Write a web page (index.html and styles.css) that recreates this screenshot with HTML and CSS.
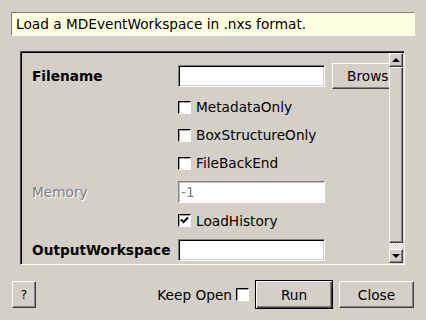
FILE: index.html
```html
<!DOCTYPE html>
<html lang="en">
<head>
    <meta charset="UTF-8">
    <title>LoadMD input dialog</title>
    <link rel="stylesheet" href="styles.css">
</head>
<body>
    <div class="desc">Load a MDEventWorkspace in .nxs format.</div>

    <div class="frame">
        <div class="view">
            <div class="row first">
                <span class="label bold">Filename</span>
                <input class="field" type="text">
                <button class="btn browse">Browse</button>
            </div>
            <div class="row">
                <span></span>
                <label class="check"><span class="box"></span>MetadataOnly</label>
            </div>
            <div class="row">
                <span></span>
                <label class="check"><span class="box"></span>BoxStructureOnly</label>
            </div>
            <div class="row">
                <span></span>
                <label class="check"><span class="box"></span>FileBackEnd</label>
            </div>
            <div class="row tall">
                <span class="label disabled">Memory</span>
                <input class="field" type="text" value="-1" disabled>
            </div>
            <div class="row tall">
                <span></span>
                <label class="check">
                    <span class="box">
                        <svg width="11" height="11" viewBox="0 0 11 11"><path d="M2 4.5 L4.5 7 L9 2.5" fill="none" stroke="#000" stroke-width="2"/></svg>
                    </span>LoadHistory
                </label>
            </div>
            <div class="row tall">
                <span class="label bold">OutputWorkspace</span>
                <input class="field" type="text">
            </div>
        </div>

        <div class="scrollbar">
            <div class="sb-btn"><span class="arrow up"></span></div>
            <div class="sb-handle"></div>
            <div class="sb-trough"></div>
            <div class="sb-btn"><span class="arrow down"></span></div>
        </div>
    </div>

    <div class="footer">
        <button class="btn help">?</button>
        <span class="keep">Keep Open</span>
        <span class="box"></span>
        <button class="btn run">Run</button>
        <button class="btn close">Close</button>
    </div>
</body>
</html>
```

FILE: styles.css
```css
/* Page: classic grey dialog */
body {
    margin: 0;
    width: 426px;
    height: 320px;
    overflow: hidden;
    background-color: #d4d0c8;
    color: #000;
    font-family: "DejaVu Sans", sans-serif;
    font-size: 13.7px;
}

/* Algorithm description box */
.desc {
    box-sizing: border-box;
    margin: 12px 11px 0 11px;
    height: 24px;
    padding-left: 4px;
    display: flex;
    align-items: center;
    background-color: #ffffe1;
    border: 1px solid;
    border-color: #808080 #fff #fff #808080;
    white-space: nowrap;
}

/* Sunken scroll frame */
.frame {
    box-sizing: border-box;
    margin: 15px 0 0 20px;
    width: 385px;
    height: 214px;
    display: flex;
    border: 1px solid;
    border-color: #404040 #fff #fff #404040;
    box-shadow: inset 1px 1px 0 #000, inset -1px -1px 0 #d4d0c8;
    padding: 1px;
}

.view {
    flex: 1;
    overflow: hidden;
    padding: 10px 0 0 10px;
}

.row {
    display: grid;
    grid-template-columns: 146px 146px auto;
    align-items: center;
    height: 28px;
}

.row.first {
    height: 26px;
    margin-bottom: 4px;
}

.row.tall {
    height: 29px;
}

.label {
    white-space: nowrap;
}

.bold {
    font-weight: bold;
}

.disabled {
    color: #808080;
    text-shadow: 1px 1px 0 #fff;
}

/* Line edits */
.field {
    box-sizing: border-box;
    width: 147px;
    height: 22px;
    margin: 0;
    padding: 0 2px;
    font: inherit;
    color: #000;
    background-color: #fff;
    border: 1px solid;
    border-color: #808080 #fff #fff #808080;
    box-shadow: inset 1px 1px 0 #000, inset -1px -1px 0 #d4d0c8;
    outline: none;
}

.field:disabled {
    color: #808080;
    box-shadow: inset 1px 1px 0 #c0c0c0;
}

/* Check boxes */
.check {
    grid-column: 2 / 4;
    display: flex;
    align-items: center;
    white-space: nowrap;
}

.box {
    box-sizing: border-box;
    width: 13px;
    height: 13px;
    display: inline-flex;
    align-items: center;
    justify-content: center;
    flex-shrink: 0;
    background-color: #fff;
    border: 1px solid;
    border-color: #000 #fff #fff #000;
    box-shadow: 1px 1px 0 #a0a0a0 inset;
}

.check .box {
    margin-right: 5px;
}

/* Push buttons */
.btn {
    box-sizing: border-box;
    height: 27px;
    margin: 0;
    padding: 0;
    font: inherit;
    color: #000;
    background-color: #d4d0c8;
    border: 1px solid;
    border-color: #fff #404040 #404040 #fff;
    box-shadow: inset -1px -1px 0 #808080;
}

.browse {
    width: 80px;
    height: 26px;
    margin-left: 8px;
}

/* Vertical scroll bar */
.scrollbar {
    width: 14px;
    display: flex;
    flex-direction: column;
}

.sb-btn,
.sb-handle {
    box-sizing: border-box;
    background-color: #d4d0c8;
    border: 1px solid;
    border-color: #fff #404040 #404040 #fff;
    box-shadow: inset -1px -1px 0 #808080;
}

.sb-btn {
    height: 14px;
    display: flex;
    align-items: center;
    justify-content: center;
}

.sb-handle {
    height: 176px;
}

.sb-trough {
    height: 6px;
    background: repeating-conic-gradient(#fff 0 25%, #d4d0c8 0 50%) 0 0 / 2px 2px;
}

.arrow {
    width: 0;
    height: 0;
    border-left: 4px solid transparent;
    border-right: 4px solid transparent;
}

.arrow.up {
    border-bottom: 4px solid #000;
}

.arrow.down {
    border-top: 4px solid #000;
}

/* Bottom button bar */
.footer {
    margin-top: 15px;
    height: 29px;
    padding: 0 12px;
    display: flex;
    align-items: center;
}

.help {
    width: 24px;
    font-size: 12px;
}

.keep {
    margin-left: auto;
    margin-right: 4px;
}

.run {
    width: 78px;
    height: 29px;
    margin-left: 6px;
    border-color: #000;
    box-shadow: inset 1px 1px 0 #fff, inset -1px -1px 0 #404040, inset -2px -2px 0 #808080;
}

.close {
    width: 75px;
    margin-left: 6px;
}
```
